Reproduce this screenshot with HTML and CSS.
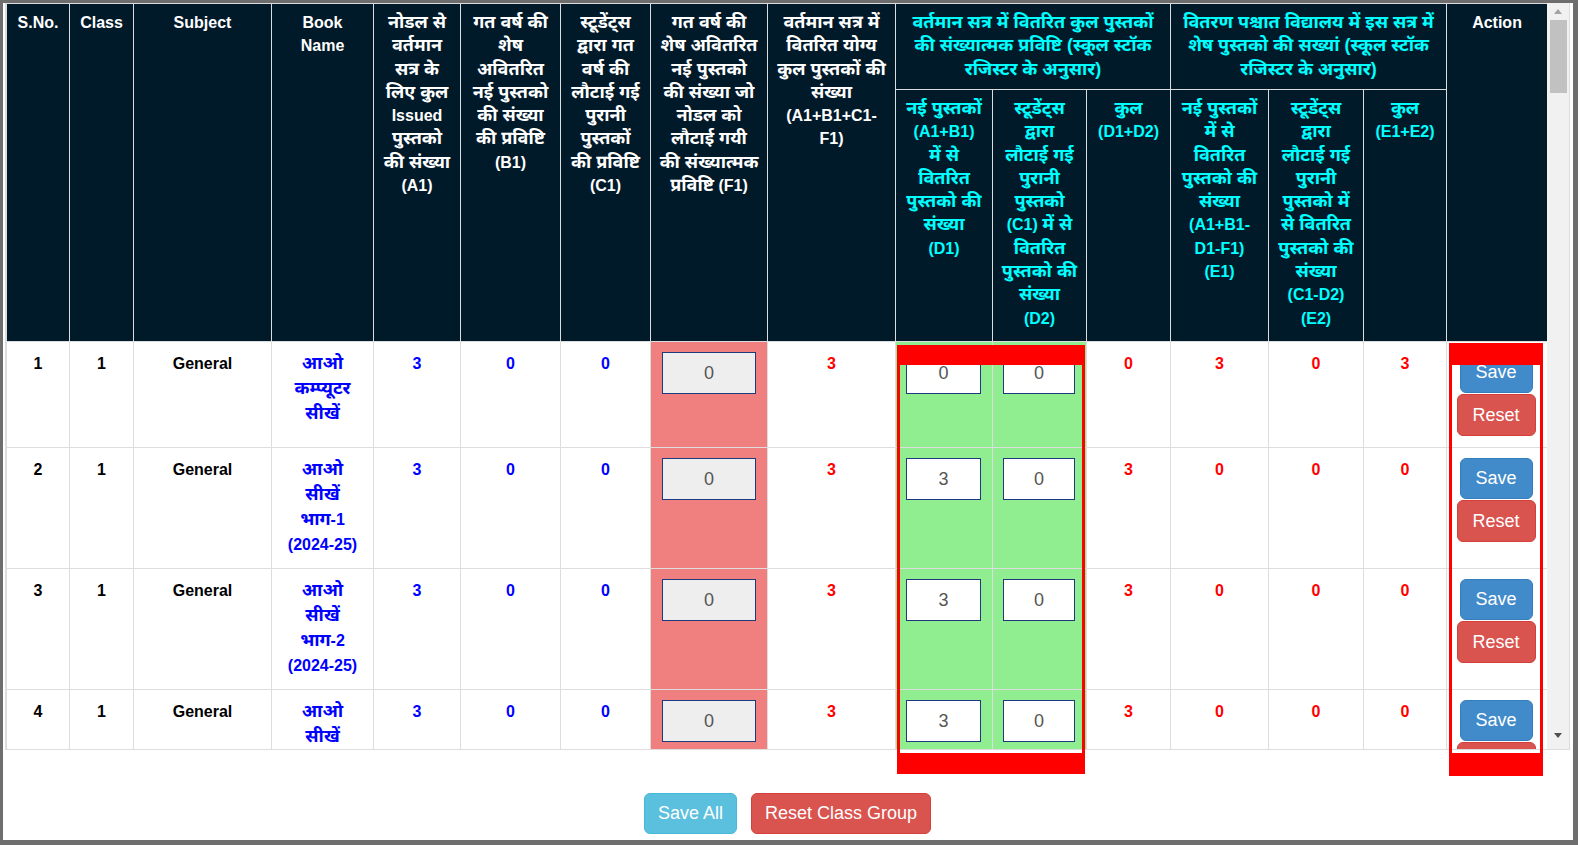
FILE: index.html
```html
<!DOCTYPE html>
<html lang="hi">
<head>
<meta charset="utf-8">
<title>Book Distribution</title>
<link rel="stylesheet" href="styles.css">
</head>
<body>
<div class="frame">
  <div class="table-box">
    <div class="table-clip">
      <table class="grid">
        <colgroup>
          <col class="w1"><col class="w2"><col class="w3"><col class="w4"><col class="w5"><col class="w6"><col class="w7"><col class="w8">
          <col class="w9"><col class="w10"><col class="w11"><col class="w12"><col class="w13"><col class="w14"><col class="w15"><col class="w16">
        </colgroup>
        <thead>
          <tr class="hr1">
            <th rowspan="2">S.No.</th>
            <th rowspan="2">Class</th>
            <th rowspan="2">Subject</th>
            <th rowspan="2">Book<br>Name</th>
            <th rowspan="2"><span class="hi">नोडल से<br>वर्तमान<br>सत्र के<br>लिए कुल</span><br>Issued<br><span class="hi">पुस्तको<br>की संख्या</span><br>(A1)</th>
            <th rowspan="2"><span class="hi">गत वर्ष की<br>शेष<br>अवितरित<br>नई पुस्तको<br>की संख्या<br>की प्रविष्टि</span><br>(B1)</th>
            <th rowspan="2"><span class="hi">स्टूडेंट्स<br>द्वारा गत<br>वर्ष की<br>लौटाई गई<br>पुरानी<br>पुस्तकों<br>की प्रविष्टि</span><br>(C1)</th>
            <th rowspan="2"><span class="hi">गत वर्ष की<br>शेष अवितरित<br>नई पुस्तको<br>की संख्या जो<br>नोडल को<br>लौटाई गयी<br>की संख्यात्मक<br>प्रविष्टि</span> (F1)</th>
            <th rowspan="2"><span class="hi">वर्तमान सत्र में<br>वितरित योग्य<br>कुल पुस्तकों की<br>संख्या</span><br>(A1+B1+C1-<br>F1)</th>
            <th colspan="3" class="aqua"><span class="hi">वर्तमान सत्र में वितरित कुल पुस्तकों<br>की संख्यात्मक प्रविष्टि (स्कूल स्टॉक<br>रजिस्टर के अनुसार)</span></th>
            <th colspan="3" class="aqua"><span class="hi">वितरण पश्चात विद्यालय में इस सत्र में<br>शेष पुस्तको की सख्यां (स्कूल स्टॉक<br>रजिस्टर के अनुसार)</span></th>
            <th rowspan="2">Action</th>
          </tr>
          <tr class="hr2">
            <th class="aqua"><span class="hi">नई पुस्तकों</span><br>(A1+B1)<br><span class="hi">में से<br>वितरित<br>पुस्तको की<br>संख्या</span><br>(D1)</th>
            <th class="aqua"><span class="hi">स्टूडेंट्स<br>द्वारा<br>लौटाई गई<br>पुरानी<br>पुस्तको</span><br>(C1) <span class="hi">में से<br>वितरित<br>पुस्तको की<br>संख्या</span><br>(D2)</th>
            <th class="aqua"><span class="hi">कुल</span><br>(D1+D2)</th>
            <th class="aqua"><span class="hi">नई पुस्तकों<br>में से<br>वितरित<br>पुस्तको की<br>संख्या</span><br>(A1+B1-<br>D1-F1)<br>(E1)</th>
            <th class="aqua"><span class="hi">स्टूडेंट्स<br>द्वारा<br>लौटाई गई<br>पुरानी<br>पुस्तको में<br>से वितरित<br>पुस्तको की<br>संख्या</span><br>(C1-D2)<br>(E2)</th>
            <th class="aqua"><span class="hi">कुल</span><br>(E1+E2)</th>
          </tr>
        </thead>
        <tbody>
          <tr class="r1">
            <td>1</td><td>1</td><td>General</td>
            <td class="blue"><span class="hi">आओ<br>कम्प्यूटर<br>सीखें</span></td>
            <td class="blue">3</td><td class="blue">0</td><td class="blue">0</td>
            <td class="coral"><input class="inp ro" type="text" value="0" readonly></td>
            <td class="red">3</td>
            <td class="green"><input class="inp" type="text" value="0"></td>
            <td class="green"><input class="inp" type="text" value="0"></td>
            <td class="red">0</td><td class="red">3</td><td class="red">0</td><td class="red">3</td>
            <td class="act"><div class="act-stack"><button class="btn btn-primary">Save</button><button class="btn btn-danger btn-reset">Reset</button></div></td>
          </tr>
          <tr class="r2">
            <td>2</td><td>1</td><td>General</td>
            <td class="blue"><span class="hi">आओ<br>सीखें<br>भाग</span>-1<br>(2024-25)</td>
            <td class="blue">3</td><td class="blue">0</td><td class="blue">0</td>
            <td class="coral"><input class="inp ro" type="text" value="0" readonly></td>
            <td class="red">3</td>
            <td class="green"><input class="inp" type="text" value="3"></td>
            <td class="green"><input class="inp" type="text" value="0"></td>
            <td class="red">3</td><td class="red">0</td><td class="red">0</td><td class="red">0</td>
            <td class="act"><div class="act-stack"><button class="btn btn-primary">Save</button><button class="btn btn-danger btn-reset">Reset</button></div></td>
          </tr>
          <tr class="r2">
            <td>3</td><td>1</td><td>General</td>
            <td class="blue"><span class="hi">आओ<br>सीखें<br>भाग</span>-2<br>(2024-25)</td>
            <td class="blue">3</td><td class="blue">0</td><td class="blue">0</td>
            <td class="coral"><input class="inp ro" type="text" value="0" readonly></td>
            <td class="red">3</td>
            <td class="green"><input class="inp" type="text" value="3"></td>
            <td class="green"><input class="inp" type="text" value="0"></td>
            <td class="red">3</td><td class="red">0</td><td class="red">0</td><td class="red">0</td>
            <td class="act"><div class="act-stack"><button class="btn btn-primary">Save</button><button class="btn btn-danger btn-reset">Reset</button></div></td>
          </tr>
          <tr class="r2">
            <td>4</td><td>1</td><td>General</td>
            <td class="blue"><span class="hi">आओ<br>सीखें<br>भाग</span>-3<br>(2024-25)</td>
            <td class="blue">3</td><td class="blue">0</td><td class="blue">0</td>
            <td class="coral"><input class="inp ro" type="text" value="0" readonly></td>
            <td class="red">3</td>
            <td class="green"><input class="inp" type="text" value="3"></td>
            <td class="green"><input class="inp" type="text" value="0"></td>
            <td class="red">3</td><td class="red">0</td><td class="red">0</td><td class="red">0</td>
            <td class="act"><div class="act-stack"><button class="btn btn-primary">Save</button><button class="btn btn-danger btn-reset">Reset</button></div></td>
          </tr>
        </tbody>
      </table>
    </div>
    <div class="scrollbar">
      <div class="sb-btn"><span class="tri-up"></span></div>
      <div class="sb-thumb"></div>
      <div class="sb-fill"></div>
      <div class="sb-btn sb-down"><span class="tri-down"></span></div>
    </div>
  </div>
  <div class="footer">
    <button class="btn btn-info btn-foot">Save All</button>
    <button class="btn btn-danger btn-foot">Reset Class Group</button>
  </div>
  <div class="mark mark-green"></div>
  <div class="mark mark-action"></div>
</div>
</body>
</html>
```

FILE: styles.css
```css
* { box-sizing: border-box; }
html, body { margin: 0; padding: 0; background: #fff; }
body {
  font-family: "Liberation Sans", "Noto Sans Devanagari", "Noto Sans", "Lohit Devanagari", sans-serif;
}

.frame {
  position: relative;
  width: 1578px;
  height: 845px;
  border-style: solid;
  border-color: #6e6e6e;
  border-width: 3px 5px 5px 3px;
  padding: 0 3px 0 2px;
  background: #fff;
  display: flex;
  flex-direction: column;
  overflow: hidden;
}

.table-box {
  display: flex;
  height: 747px;
  border: 1px solid #ddd;
  border-top: 0;
  flex: none;
}
.table-clip {
  width: 1541px;
  overflow: hidden;
  flex: none;
}

.grid {
  width: 1541px;
  table-layout: fixed;
  border-collapse: collapse;
}
.w1 { width: 63px; }
.w2 { width: 64px; }
.w3 { width: 138px; }
.w4 { width: 102px; }
.w5 { width: 87px; }
.w6 { width: 100px; }
.w7 { width: 90px; }
.w8 { width: 117px; }
.w9 { width: 128px; }
.w10 { width: 97px; }
.w11 { width: 94px; }
.w12 { width: 84px; }
.w13 { width: 98px; }
.w14 { width: 95px; }
.w15 { width: 83px; }
.w16 { width: 101px; }

.grid th, .grid td {
  border: 1px solid #ddd;
  text-align: center;
  vertical-align: top;
  white-space: nowrap;
}
.grid th {
  background: #011a2a;
  color: #fff;
  font-size: 16px;
  font-weight: bold;
  line-height: 23.3px;
  padding: 7px 1px;
}
.grid th.aqua { color: #00ffff; }
.hr1 { height: 86px; }
.hr2 { height: 252px; }

.hi {
  font-size: 18px;
  vertical-align: top;
}

.grid td {
  font-size: 16px;
  font-weight: bold;
  line-height: 25px;
  padding: 9px 2px 10px;
  color: #000;
  background: #fff;
}
.r1 { height: 106px; }
.r2 { height: 121px; }

.grid td.blue { color: #0000ff; }
.grid td.red { color: #ff0000; }
.grid td.coral { background: #f08080; padding: 10px 11px; }
.grid td.green { background: #90ee90; padding: 10px 11px 10px 10px; }

.inp {
  display: block;
  width: 100%;
  height: 42px;
  border: 1px solid #1d3b7c;
  background: #fff;
  color: #555;
  font-family: "Liberation Sans", sans-serif;
  font-size: 18px;
  text-align: center;
  padding: 0;
  margin: 0;
  outline: none;
}
.inp.ro { background: #eee; }

.grid td.act { padding: 10px 2px 10px 0; }
.act-stack {
  display: flex;
  flex-direction: column;
  align-items: center;
}

.btn {
  font-family: "Liberation Sans", sans-serif;
  font-size: 18px;
  color: #fff;
  height: 41px;
  line-height: 39px;
  padding: 0 15px;
  border-radius: 6px;
  border: 1px solid transparent;
  margin: 0;
  cursor: pointer;
}
.btn-reset { height: 42px; line-height: 40px; padding: 0 15px; margin-top: 1px; }
.btn-primary { background: #428bca; border-color: #357ebd; }
.btn-danger { background: #d9534f; border-color: #d43f3a; }
.btn-info { background: #5bc0de; border-color: #46b8da; }
.btn-foot { padding: 0 13px; }

.scrollbar {
  width: 22px;
  flex: none;
  background: #f1f1f1;
  display: flex;
  flex-direction: column;
  align-items: center;
}
.sb-btn {
  height: 17px;
  width: 100%;
  display: flex;
  align-items: center;
  justify-content: center;
  flex: none;
}
.sb-down { margin-bottom: 5px; }
.tri-up {
  width: 0; height: 0;
  border-left: 4.5px solid transparent;
  border-right: 4.5px solid transparent;
  border-bottom: 5px solid #a3a3a3;
}
.tri-down {
  width: 0; height: 0;
  border-left: 4.5px solid transparent;
  border-right: 4.5px solid transparent;
  border-top: 5px solid #505050;
}
.sb-thumb {
  width: 17px;
  height: 73px;
  background: #c1c1c1;
  flex: none;
}
.sb-fill { flex: 1; }

.footer {
  display: flex;
  justify-content: center;
  gap: 14px;
  padding-top: 43px;
}

.mark {
  position: absolute;
  border: 3px solid #ff0000;
  z-index: 5;
  pointer-events: none;
}
.mark-green {
  left: 894px;
  top: 342px;
  width: 188px;
  height: 429px;
  border-top-width: 20px;
  border-bottom-width: 21px;
}
.mark-action {
  left: 1446px;
  top: 340px;
  width: 94px;
  height: 433px;
  border-top-width: 22px;
  border-bottom-width: 23px;
}
```
